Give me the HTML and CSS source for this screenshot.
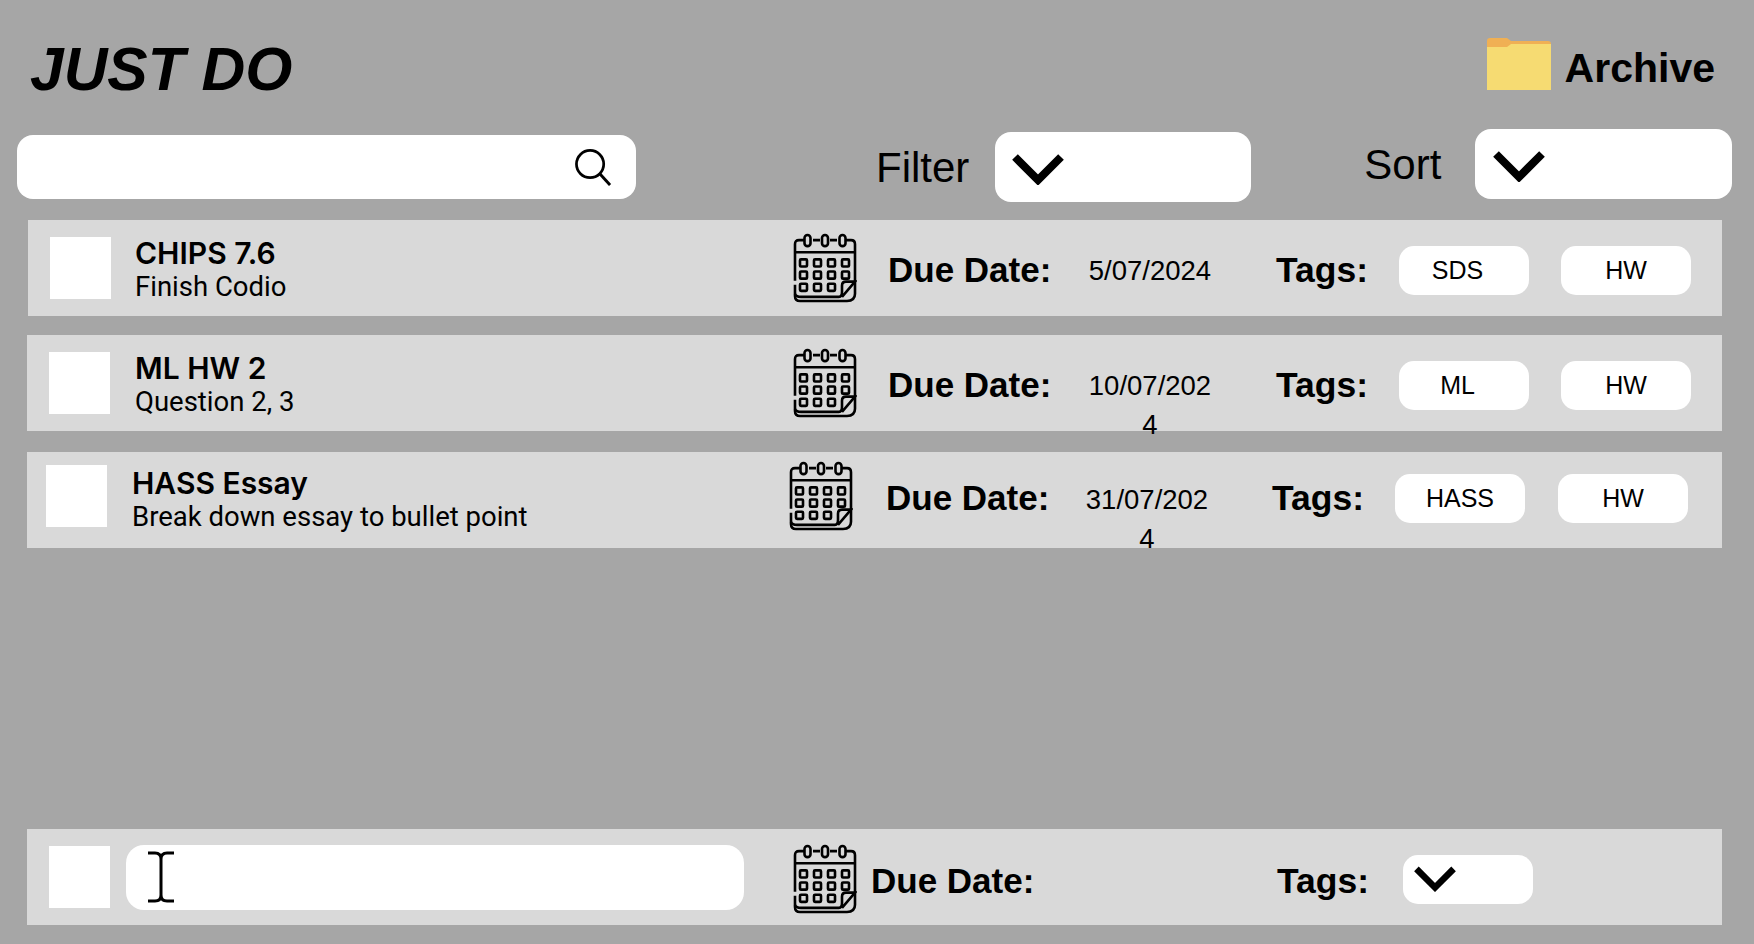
FILE: index.html
```html
<!DOCTYPE html>
<html lang="en">
<head>
    <meta charset="UTF-8">
    <title>Just Do</title>
    <link rel="stylesheet" href="styles.css">
</head>
<body>
    <svg class="defs" width="0" height="0">
        <symbol id="calendar" viewBox="0 0 64 70" preserveAspectRatio="none">
            <g fill="none" stroke="#000" stroke-width="2.6">
                <path d="M12 7H6Q2 7 2 11V47M2 51V62Q2 67 7 67H54Q62 67 62 60V11Q62 7 58 7H52"/>
                <path d="M20 7H27M37 7H44"/>
                <rect x="11.500" y="2" width="6" height="11" rx="3"/>
                <rect x="29" y="2" width="6" height="11" rx="3"/>
                <rect x="46.500" y="2" width="6" height="11" rx="3"/>
                <path d="M2 19H62"/>
                <path d="M2 60Q3 63 8 63H46Q49 63 49 58V52Q49 48 53 48H62L49 63"/>
            </g>
            <g fill="none" stroke="#000" stroke-width="2.6">
                <rect x="7" y="26" width="7" height="7" rx="1"/>
                <rect x="21" y="26" width="7" height="7" rx="1"/>
                <rect x="35" y="26" width="7" height="7" rx="1"/>
                <rect x="49" y="26" width="7" height="7" rx="1"/>
                <rect x="7" y="38" width="7" height="7" rx="1"/>
                <rect x="21" y="38" width="7" height="7" rx="1"/>
                <rect x="35" y="38" width="7" height="7" rx="1"/>
                <rect x="49" y="38" width="7" height="7" rx="1"/>
                <rect x="7" y="50" width="7" height="7" rx="1"/>
                <rect x="21" y="50" width="7" height="7" rx="1"/>
                <rect x="35" y="50" width="7" height="7" rx="1"/>
            </g>
        </symbol>
        <symbol id="chevron" viewBox="0 0 52 31">
            <path d="M3 3L26 26L49 3" fill="none" stroke="#000" stroke-width="8"/>
        </symbol>
    </svg>

    <div class="page">
        <header class="top">
            <h1>JUST DO</h1>
            <div class="archive">
                <svg class="folder" viewBox="0 0 64 52">
                    <path d="M0 3Q0 0 3 0H20L24 3H61Q64 3 64 6V12H0Z" fill="#f0b054"/>
                    <path d="M0 9H20L24 6H64V52H0Z" fill="#f6db72"/>
                </svg>
                <span class="archive-text">Archive</span>
            </div>
        </header>

        <div class="toolbar">
            <div class="search">
                <svg class="search-icon" viewBox="0 0 38 38">
                    <circle cx="15.500" cy="15.500" r="14" fill="none" stroke="#000" stroke-width="2.800"/>
                    <path d="M25 25L36 37" fill="none" stroke="#000" stroke-width="3"/>
                </svg>
            </div>
            <span class="tool-label filter-label">Filter</span>
            <div class="dropdown filter-box"><svg class="chevron"><use href="#chevron"/></svg></div>
            <span class="tool-label sort-label">Sort</span>
            <div class="dropdown sort-box"><svg class="chevron"><use href="#chevron"/></svg></div>
        </div>

        <div class="row row-one">
            <div class="check"></div>
            <div class="task">
                <div class="task-name">CHIPS 7.6</div>
                <div class="task-note">Finish Codio</div>
            </div>
            <svg class="cal"><use href="#calendar"/></svg>
            <span class="label due">Due Date:</span>
            <span class="date">5/07/2024</span>
            <span class="label tags">Tags:</span>
            <span class="pill pill-left">SDS</span>
            <span class="pill">HW</span>
        </div>

        <div class="row row-two">
            <div class="check"></div>
            <div class="task">
                <div class="task-name">ML HW 2</div>
                <div class="task-note">Question 2, 3</div>
            </div>
            <svg class="cal"><use href="#calendar"/></svg>
            <span class="label due">Due Date:</span>
            <span class="date">10/07/2024</span>
            <span class="label tags">Tags:</span>
            <span class="pill pill-left">ML</span>
            <span class="pill">HW</span>
        </div>

        <div class="row row-three">
            <div class="check"></div>
            <div class="task">
                <div class="task-name">HASS Essay</div>
                <div class="task-note">Break down essay to bullet point</div>
            </div>
            <svg class="cal"><use href="#calendar"/></svg>
            <span class="label due">Due Date:</span>
            <span class="date">31/07/2024</span>
            <span class="label tags">Tags:</span>
            <span class="pill">HASS</span>
            <span class="pill">HW</span>
        </div>

        <div class="row row-new">
            <div class="check"></div>
            <div class="new-input">
                <svg class="ibeam" viewBox="0 0 28 52">
                    <path d="M1 2H8Q14 2 14 8V44Q14 50 8 50H1M27 2H20Q14 2 14 8M14 44Q14 50 20 50H27" fill="none" stroke="#000" stroke-width="3"/>
                </svg>
            </div>
            <svg class="cal"><use href="#calendar"/></svg>
            <span class="label due">Due Date:</span>
            <span class="label tags">Tags:</span>
            <div class="tag-select"><svg class="chevron-small"><use href="#chevron"/></svg></div>
        </div>
    </div>
</body>
</html>
```

FILE: styles.css
```css
* {
    box-sizing: border-box;
}

body {
    font-family: "Liberation Sans", Arial, sans-serif;
    margin: 0;
    padding: 0;
    background-color: #a6a6a6;
    color: #000;
}

.defs {
    position: absolute;
}

.page {
    display: flex;
    flex-direction: column;
    height: 944px;
    padding-bottom: 19px;
    overflow: hidden;
}

/* top */
.top {
    display: flex;
    justify-content: space-between;
    height: 129px;
    padding: 38px 38px 0 30px;
}

h1 {
    margin: 0;
    font-size: 60.500px;
    line-height: 62px;
    font-weight: bold;
    font-style: italic;
}

.archive {
    display: flex;
    gap: 14px;
    height: 52px;
    margin-right: 1px;
    font-size: 41px;
    font-weight: bold;
    line-height: 52px;
}

.archive-text {
    padding-top: 4px;
}

.folder {
    width: 64px;
    height: 52px;
}

/* search, filter, sort */
.toolbar {
    display: flex;
    align-items: flex-start;
    height: 91px;
    padding-left: 17px;
}

.search {
    display: flex;
    align-items: center;
    width: 619px;
    height: 64px;
    margin-top: 6px;
    padding-left: 558px;
    background-color: #fff;
    border-radius: 16px;
}

.search-icon {
    width: 37px;
    height: 37px;
}

.tool-label {
    font-size: 42px;
    line-height: 48px;
}

.filter-label {
    margin: 15px 26px 0 240px;
}

.sort-label {
    margin: 12px 34px 0 113px;
}

.dropdown {
    width: 257px;
    height: 70px;
    padding: 22px 0 0 18px;
    background-color: #fff;
    border-radius: 16px;
}

.filter-box {
    margin-top: 3px;
    width: 256px;
    padding-left: 17px;
}

.chevron {
    display: block;
    width: 52px;
    height: 31px;
}

/* task rows */
.row {
    display: flex;
    align-items: center;
    flex-shrink: 0;
    width: 1695px;
    height: 96px;
    margin-left: 27px;
    padding-left: 23px;
    background-color: #d9d9d9;
}

.row > * {
    flex-shrink: 0;
}

.row-one {
    width: 1694px;
    margin-left: 28px;
    padding-left: 22px;
}

.row-two {
    margin-top: 19px;
}

.row-two .check,
.row-new .check {
    margin-left: -1px;
    margin-right: 25px;
}

.row-three {
    margin-top: 21px;
    padding-left: 19px;
    padding-bottom: 8px;
}

.row-three .task {
    margin-top: 3px;
    padding-left: 1px;
}

.row-three .due {
    margin-left: 33px;
    margin-right: -2px;
}

.row-three .date {
    margin-top: 28px;
}

.row-three .tags {
    margin-left: 55px;
}

.row-three .pill {
    margin-right: 33px;
}

.row-new {
    margin-top: auto;
}

.check {
    width: 61px;
    height: 62px;
    margin-right: 24px;
    background-color: #fff;
}

.task {
    width: 658px;
    padding-top: 3px;
}

.task-name {
    font-family: Inter, sans-serif;
    font-size: 30px;
    line-height: 34px;
    font-weight: 600;
}

.task-note {
    font-family: Roboto, sans-serif;
    font-size: 27.500px;
    line-height: 33px;
}

.cal {
    width: 64px;
    height: 71px;
    margin-top: 1px;
}

.label {
    margin-top: 4px;
    font-size: 35px;
    font-weight: bold;
}

.due {
    width: 192px;
    margin-left: 31px;
    margin-right: -1px;
}

.date {
    align-self: flex-start;
    width: 130px;
    margin: 31px 5px 0 6px;
    font-size: 27.500px;
    line-height: 39px;
    text-align: center;
    word-break: break-all;
}

.tags {
    width: 123px;
    margin-left: 56px;
    font-size: 35.500px;
}

.pill {
    display: flex;
    align-items: center;
    justify-content: center;
    width: 130px;
    height: 49px;
    margin-top: 5px;
    margin-right: 32px;
    background-color: #fff;
    border-radius: 15px;
    font-size: 25px;
}

.pill-left {
    padding-right: 13px;
}

/* new task row */
.new-input {
    width: 618px;
    height: 65px;
    margin-top: 1px;
    margin-left: -9px;
    padding: 6px 0 0 21px;
    background-color: #fff;
    border-radius: 18px;
}

.ibeam {
    display: block;
    width: 28px;
    height: 52px;
}

.row-new .cal {
    margin-left: 49px;
    margin-top: 5px;
}

.row-new .due {
    width: 322px;
    margin-top: 7px;
    margin-left: 14px;
    margin-right: 0;
}

.row-new .tags {
    width: 126px;
    margin-top: 8px;
    margin-left: 84px;
}

.tag-select {
    width: 130px;
    height: 49px;
    margin-top: 5px;
    padding: 11px 0 0 11px;
    background-color: #fff;
    border-radius: 15px;
}

.chevron-small {
    display: block;
    width: 42px;
    height: 26px;
}
```
